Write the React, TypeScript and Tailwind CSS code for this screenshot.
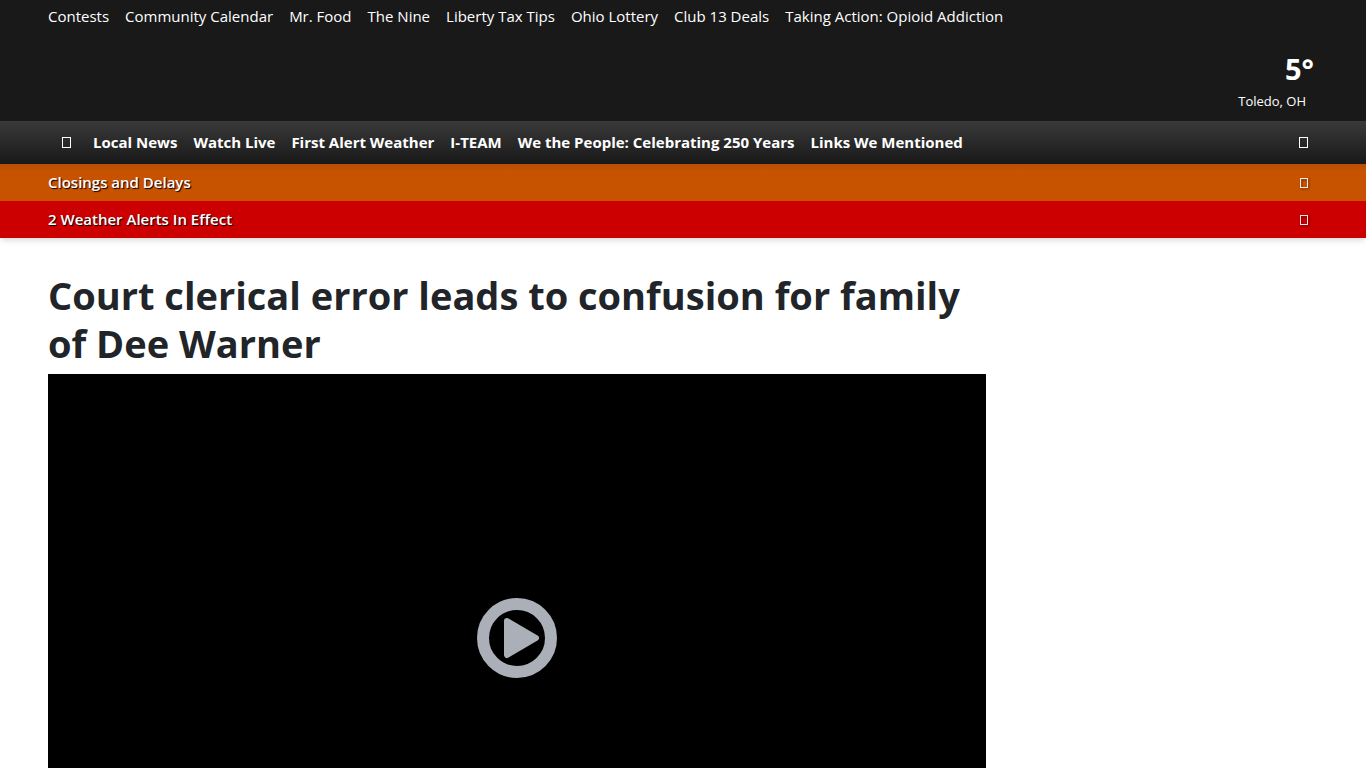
const topLinks = ['Contests', 'Community Calendar', 'Mr. Food', 'The Nine', 'Liberty Tax Tips', 'Ohio Lottery', 'Club 13 Deals', 'Taking Action: Opioid Addiction'];
const navLinks = ['Local News', 'Watch Live', 'First Alert Weather', 'I-TEAM', 'We the People: Celebrating 250 Years', 'Links We Mentioned'];

function Glyph({ className }: { className: string }) {
  return (
    <svg className={className} viewBox="0 0 9 11" fill="none" stroke="currentColor" aria-hidden="true">
      <rect x="0.5" y="0.5" width="8" height="10" />
    </svg>
  );
}

function AlertBar({ label, className }: { label: string; className: string }) {
  return (
    <div className={`flex h-[37px] items-center justify-between pl-12 pr-[58px] text-white ${className}`}>
      <a href="#" className="pb-[2px] text-[15px] font-semibold leading-6 [text-shadow:1px_1px_1px_#000]">{label}</a>
      <button type="button" aria-label={`Open ${label}`}>
        <Glyph className="h-[10px] w-2 drop-shadow-[1px_1px_1px_rgba(0,0,0,0.6)]" />
      </button>
    </div>
  );
}

export default function App() {
  return (
    <div className="h-screen overflow-hidden bg-white font-['Open_Sans','Noto_Sans',sans-serif] text-[#212529]">
      <header className="relative shadow-md">
        <div className="bg-[#191919] text-white">
          <nav aria-label="Featured" className="flex h-8 items-center gap-4 whitespace-nowrap px-12 text-[15px]">
            {topLinks.map((t) => <a key={t} href="#">{t}</a>)}
          </nav>
          <div className="flex h-[89px] flex-col items-end pr-[52px] pt-[19px]">
            <a href="#" className="text-[29px] font-bold leading-9">5°</a>
            <span className="pr-2 text-[13px] leading-7">Toledo, OH</span>
          </div>
        </div>
        <nav aria-label="Main" className="flex h-[43px] items-center whitespace-nowrap bg-linear-to-b from-[#3a3a3a] to-[#191919] pl-[62px] pr-[58px] text-[15px] font-bold text-white">
          <button type="button" aria-label="Menu" className="mr-[22px]"><Glyph className="h-[11px] w-[9px]" /></button>
          <div className="flex gap-4">
            {navLinks.map((t) => <a key={t} href="#">{t}</a>)}
          </div>
          <button type="button" aria-label="Search" className="ml-auto"><Glyph className="h-[11px] w-[9px]" /></button>
        </nav>
        <AlertBar label="Closings and Delays" className="bg-[#c75300] bg-linear-to-b from-[#b94d0b] to-[#c75300] to-20%" />
        <AlertBar label="2 Weather Alerts In Effect" className="bg-[#cc0000]" />
      </header>
      <main className="px-12 pt-[33px]">
        <article className="max-w-[938px]">
          <h1 className="text-[38px] font-bold leading-12">Court clerical error leads to confusion for family of Dee Warner</h1>
          <div className="mt-[7px] flex aspect-video items-center justify-center bg-black">
            <button type="button" aria-label="Play video" className="text-[#abb0b8]">
              <svg className="size-20" viewBox="0 0 80 80" aria-hidden="true">
                <circle cx="40" cy="40" r="34" fill="none" stroke="currentColor" strokeWidth="12" />
                <path d="M30 23 L59 40 L30 57 Z" fill="currentColor" stroke="currentColor" strokeWidth="6" strokeLinejoin="round" />
              </svg>
            </button>
          </div>
        </article>
      </main>
    </div>
  );
}
